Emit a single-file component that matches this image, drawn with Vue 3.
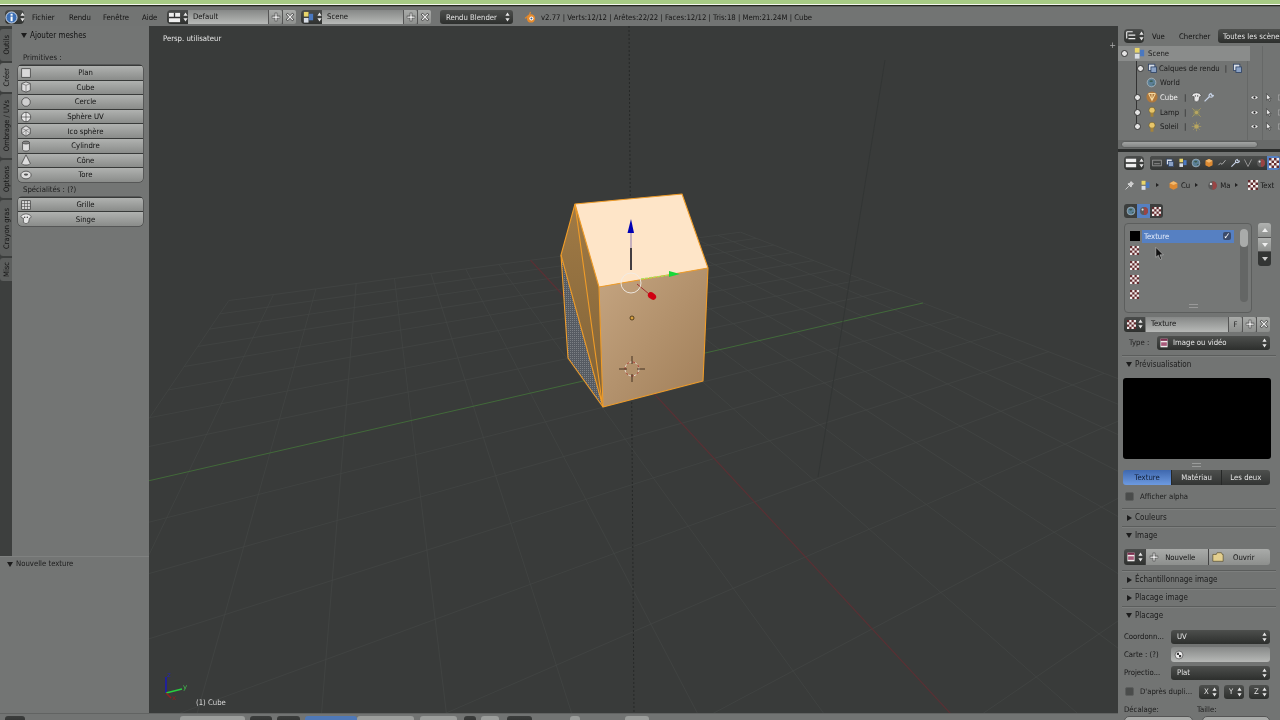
<script setup>
import { computed } from 'vue'

const H = (u, v) => {
  const w = 1 + 0.2935 * u - 0.64 * v
  return [(561.9 * u - 238 * v + 632) / w, (22.1 * u - 57 * v + 369.8) / w]
}
const gridLines = computed(() => {
  const out = []
  for (let i = -8; i <= 8; i++) {
    if (i !== 0) {
      const a = H(i / 8, -1), b = H(i / 8, 1), c = H(-1, i / 8), d = H(1, i / 8)
      out.push({ k: 'u' + i, x1: a[0], y1: a[1], x2: b[0], y2: b[1] })
      out.push({ k: 'v' + i, x1: c[0], y1: c[1], x2: d[0], y2: d[1] })
    }
  }
  return out
})
const greenAxis = [H(-1, 0), H(1, 0)]
const redAxis = [H(0, -1), H(0, 1)]

const tabs = [
  { t: 'Outils', h: 32 }, { t: 'Créer', h: 29, on: true }, { t: 'Ombrage / UVs', h: 64 },
  { t: 'Options', h: 38 }, { t: 'Crayon gras', h: 56 }, { t: 'Misc', h: 23 }
]
const prims = [
  ['Plan', 'i-plane'], ['Cube', 'i-cube'], ['Cercle', 'i-circle'], ['Sphère UV', 'i-sphere'],
  ['Ico sphère', 'i-ico'], ['Cylindre', 'i-cyl'], ['Cône', 'i-cone'], ['Tore', 'i-torus']
]
const specs = [['Grille', 'i-grid'], ['Singe', 'i-monkey']]
const editorTabs = ['i-render', 'i-layers', 'i-scene', 'i-world', 'i-obj', 'i-link', 'i-wrench', 'i-vert', 'i-mat', 'i-check']
</script>

<template>
  <div class="app">
    <svg class="defs" width="0" height="0">
      <defs>
        <symbol id="i-ud" viewBox="0 0 6 12"><path d="M3 0.5 5.5 4.5H.5zM3 11.5.5 7.5h5z" fill="#e8e8e8"/></symbol>
        <symbol id="i-info" viewBox="0 0 14 14"><circle cx="7" cy="7" r="6" fill="#3c6fb5" stroke="#dfe8f5"/><rect x="6" y="6" width="2.2" height="5" fill="#fff"/><rect x="6" y="3" width="2.2" height="2" fill="#fff"/></symbol>
        <symbol id="i-layout" viewBox="0 0 14 14"><rect x="1" y="2" width="12" height="10" fill="#eee"/><path d="M7 2v5M1 7h12" stroke="#333" stroke-width="1.4"/></symbol>
        <symbol id="i-scene" viewBox="0 0 14 14"><rect x="2" y="1" width="5" height="5" fill="#e9d56a"/><rect x="7.500" y="3" width="4.500" height="7" fill="#4a78c0"/><rect x="2" y="7.500" width="5" height="5" fill="#d8dde6"/></symbol>
        <symbol id="i-plus" viewBox="0 0 12 12"><path d="M6 1v10M1 6h10" stroke="#333" stroke-width="3"/><path d="M6 1.500v9M1.500 6h9" stroke="#fff" stroke-width="1.500"/></symbol>
        <symbol id="i-x" viewBox="0 0 12 12"><path d="M2 2l8 8M10 2l-8 8" stroke="#333" stroke-width="3"/><path d="M2.500 2.500l7 7M9.500 2.500l-7 7" stroke="#e8e8e8" stroke-width="1.600"/></symbol>
        <symbol id="i-blender" viewBox="0 0 14 14"><circle cx="7.500" cy="8" r="4.500" fill="#e58a2c"/><circle cx="8" cy="8" r="2.200" fill="#fff"/><circle cx="8" cy="8" r="1.100" fill="#3a5d8f"/><path d="M1 8 6 4 7 1" stroke="#e58a2c" stroke-width="1.200" fill="none"/></symbol>
        <symbol id="i-check" viewBox="0 0 12 12"><rect width="12" height="12" fill="#f3eeee"/><path d="M0 0h3v3H0zM6 0h3v3H6zM3 3h3v3H3zM9 3h3v3H9zM0 6h3v3H0zM6 6h3v3H6zM3 9h3v3H3zM9 9h3v3H9z" fill="#632a2d"/></symbol>
        <symbol id="i-plane" viewBox="0 0 14 14"><rect x="2" y="2" width="10" height="10" fill="#d9d9d9" stroke="#333" stroke-width=".8"/></symbol>
        <symbol id="i-cube" viewBox="0 0 14 14"><path d="M7 1l5 2v8l-5 2-5-2V3z" fill="#ddd" stroke="#333" stroke-width=".8"/><path d="M2 3l5 2 5-2M7 5v8" fill="none" stroke="#555" stroke-width=".7"/></symbol>
        <symbol id="i-circle" viewBox="0 0 14 14"><circle cx="7" cy="7" r="5" fill="#cfcfcf" stroke="#333" stroke-width=".8"/></symbol>
        <symbol id="i-sphere" viewBox="0 0 14 14"><circle cx="7" cy="7" r="5.500" fill="#e8e8e8" stroke="#333" stroke-width=".8"/><path d="M1.500 7h11M7 1.500v11" stroke="#444" stroke-width=".8"/></symbol>
        <symbol id="i-ico" viewBox="0 0 14 14"><path d="M7 1l5 3v6l-5 3-5-3V4z" fill="#ddd" stroke="#333" stroke-width=".8"/><path d="M2 4l5 2 5-2M7 6v7M2 10l5-4 5 4" fill="none" stroke="#555" stroke-width=".6"/></symbol>
        <symbol id="i-cyl" viewBox="0 0 14 14"><path d="M3 3v8c0 2.500 8 2.500 8 0V3z" fill="#ddd" stroke="#333" stroke-width=".8"/><ellipse cx="7" cy="3" rx="4" ry="1.700" fill="#888" stroke="#333" stroke-width=".8"/></symbol>
        <symbol id="i-cone" viewBox="0 0 14 14"><path d="M7 1l5 10c-1.500 2.500-8.500 2.500-10 0z" fill="#ddd" stroke="#333" stroke-width=".8"/></symbol>
        <symbol id="i-torus" viewBox="0 0 14 14"><ellipse cx="7" cy="7" rx="6" ry="4.500" fill="#ddd" stroke="#333" stroke-width=".8"/><ellipse cx="7" cy="6.500" rx="2.500" ry="1.300" fill="#555"/></symbol>
        <symbol id="i-grid" viewBox="0 0 14 14"><rect x="2" y="2" width="10" height="10" fill="#dcdcdc" stroke="#333" stroke-width=".8"/><path d="M5.300 2v10M8.700 2v10M2 5.300h10M2 8.700h10" stroke="#444" stroke-width=".7"/></symbol>
        <symbol id="i-monkey" viewBox="0 0 14 14"><path d="M1 4q2-3 6-3t6 3q0 2-2 2l-1 5q-3 3-6 0L4 6Q1 6 1 4z" fill="#e6e6e6" stroke="#333" stroke-width=".7"/><circle cx="5.500" cy="5" r=".8" fill="#333"/><circle cx="8.500" cy="5" r=".8" fill="#333"/></symbol>
        <symbol id="i-outliner" viewBox="0 0 14 14"><path d="M2 2h7M4 6h8M4 10h8M2 2v8" stroke="#eee" stroke-width="1.300" fill="none"/></symbol>
        <symbol id="i-props" viewBox="0 0 14 14"><rect x="1" y="2" width="12" height="4" fill="#eee"/><rect x="1" y="8" width="12" height="4" fill="#eee"/></symbol>
        <symbol id="i-layers" viewBox="0 0 14 14"><rect x="2" y="1.500" width="8" height="8" fill="#d9dfe8" stroke="#2b3f62"/><rect x="5" y="5" width="7" height="7" fill="#8aa1c4" stroke="#2b3f62"/></symbol>
        <symbol id="i-world" viewBox="0 0 14 14"><circle cx="7" cy="7" r="5.500" fill="#5b7f96" stroke="#c9d6dd" stroke-width=".7"/><path d="M4 5q3-2 5 0-2 3-5 0zM8 9q2-1 3 0-2 2-3 0z" fill="#3d5d50"/></symbol>
        <symbol id="i-obj" viewBox="0 0 14 14"><path d="M7 1.500l5 2.500v6l-5 2.500L2 10V4z" fill="#dd8a32"/><path d="M2 4l5 2.500L12 4 7 1.500z" fill="#f1b86e"/></symbol>
        <symbol id="i-mesh" viewBox="0 0 14 14"><circle cx="7" cy="7" r="6.500" fill="#c47a2a" opacity=".75"/><path d="M3 3l4 8 4-8M3 3h8M7 3v8" stroke="#f6d9a0" stroke-width="1.200" fill="none"/></symbol>
        <symbol id="i-lamp" viewBox="0 0 14 14"><circle cx="7" cy="5" r="3.600" fill="#e8c66a" stroke="#5a4a1a" stroke-width=".6"/><rect x="5.300" y="8" width="3.400" height="4.500" fill="#a5843a"/></symbol>
        <symbol id="i-lampdata" viewBox="0 0 14 14"><rect x="3" y="3" width="8" height="8" fill="#8a8a60" opacity=".7"/><circle cx="7" cy="7" r="2.300" fill="#b8a660"/><path d="M1.500 1.500l3 3M12.500 1.500l-3 3M1.500 12.500l3-3M12.500 12.500l-3-3" stroke="#a89a60"/></symbol>
        <symbol id="i-sun" viewBox="0 0 14 14"><circle cx="7" cy="7" r="3" fill="#b8a660"/><path d="M7 1v2.500M7 10.500V13M1 7h2.500M10.500 7H13M2.800 2.800l1.800 1.800M9.400 9.400l1.800 1.800M2.800 11.200l1.800-1.800M9.400 4.600l1.800-1.800" stroke="#a89a60"/></symbol>
        <symbol id="i-eye" viewBox="0 0 14 14"><path d="M1 7q6-6 12 0-6 6-12 0z" fill="#eee" stroke="#222" stroke-width=".6"/><circle cx="7" cy="7" r="1.800" fill="#222"/></symbol>
        <symbol id="i-arrow" viewBox="0 0 14 14"><path d="M4 1v10l2.500-2 2 4 1.500-.8-2-3.700h3z" fill="#eee" stroke="#222" stroke-width=".8"/></symbol>
        <symbol id="i-wrench" viewBox="0 0 14 14"><path d="M2 12l6-6M8 6q-1-3 2-4l1 2 2 .500q-1 3-5 1.500" stroke="#c8d4e8" stroke-width="1.600" fill="none"/></symbol>
        <symbol id="i-render" viewBox="0 0 14 14"><rect x="1" y="3" width="12" height="8" fill="none" stroke="#aaa"/><path d="M3 8h8" stroke="#aaa"/></symbol>
        <symbol id="i-link" viewBox="0 0 14 14"><path d="M2 10l3-3 2 2 5-6" stroke="#aaa" stroke-width="1.400" fill="none"/></symbol>
        <symbol id="i-vert" viewBox="0 0 14 14"><path d="M2 2l5 10 5-10" stroke="#999" stroke-width="1.300" fill="none"/></symbol>
        <symbol id="i-mat" viewBox="0 0 14 14"><circle cx="7" cy="7" r="5.500" fill="#5a5a5a"/><path d="M7 1.500a5.500 5.500 0 0 1 0 11z" fill="#994444"/><circle cx="5" cy="5" r="1.500" fill="#ddd"/></symbol>
        <symbol id="i-image" viewBox="0 0 14 14"><rect x="2" y="1" width="10" height="12" fill="#f0ecec"/><rect x="2" y="1" width="10" height="3" fill="#7c2f4f"/><rect x="3" y="6" width="8" height="5" fill="#a85a7a"/></symbol>
        <symbol id="i-folder" viewBox="0 0 14 14"><path d="M1 4h4l1-2h5l1 2h1v8H1z" fill="#e3cf8f" stroke="#4a3f1f" stroke-width=".7"/></symbol>
        <symbol id="i-uvmap" viewBox="0 0 14 14"><circle cx="7" cy="7" r="5.500" fill="#eee" stroke="#222" stroke-width=".8"/><path d="M4 4h3v3H4zM7 7h3v3H7z" fill="#333"/></symbol>
        <symbol id="i-pin" viewBox="0 0 14 14"><path d="M2 12l4-4M5 5l4 4 1-3 2-1-3-3-1 2z" stroke="#ddd" stroke-width="1.100" fill="#ccc"/></symbol>
      </defs>
    </svg>

    <div class="strip"></div>

    <header class="topbar">
      <div class="sel w19"><svg class="ic13"><use href="#i-info"/></svg><svg class="ud"><use href="#i-ud"/></svg></div>
      <nav class="menus">
        <span class="m1">Fichier</span><span class="m2">Rendu</span><span class="m3">Fenêtre</span><span class="m4">Aide</span>
      </nav>
      <div class="sel w21 s1"><svg class="ic13"><use href="#i-layout"/></svg><svg class="ud"><use href="#i-ud"/></svg></div>
      <div class="field w80">Default</div>
      <div class="mini"><svg class="ic10"><use href="#i-plus"/></svg></div>
      <div class="mini"><svg class="ic10"><use href="#i-x"/></svg></div>
      <div class="sel w21 s2"><svg class="ic13"><use href="#i-scene"/></svg><svg class="ud"><use href="#i-ud"/></svg></div>
      <div class="field w81">Scene</div>
      <div class="mini"><svg class="ic10"><use href="#i-plus"/></svg></div>
      <div class="mini"><svg class="ic10"><use href="#i-x"/></svg></div>
      <div class="drop engine"><span>Rendu Blender</span><svg class="ud"><use href="#i-ud"/></svg></div>
      <svg class="ic13 blend"><use href="#i-blender"/></svg>
      <div class="stats">v2.77 | Verts:12/12 | Arêtes:22/22 | Faces:12/12 | Tris:18 | Mem:21.24M | Cube</div>
    </header>

    <main class="main">
      <div class="work">
        <div class="work-top">
          <aside class="left">
            <div class="left-top">
              <div class="vtabs">
                <div v-for="t in tabs" :key="t.t" class="vtab" :class="{ on: t.on }" :style="{ height: t.h + 'px' }"><span>{{ t.t }}</span></div>
              </div>
              <div class="shelf">
                <div class="shelf-head"><i class="tri down"></i>Ajouter meshes</div>
                <div class="shelf-label">Primitives :</div>
                <div class="stack">
                  <div v-for="p in prims" :key="p[0]" class="tbtn"><svg class="ic12"><use :href="'#' + p[1]"/></svg><span>{{ p[0] }}</span></div>
                </div>
                <div class="shelf-label spec">Spécialités : (?)</div>
                <div class="stack">
                  <div v-for="p in specs" :key="p[0]" class="tbtn"><svg class="ic12"><use :href="'#' + p[1]"/></svg><span>{{ p[0] }}</span></div>
                </div>
              </div>
            </div>
            <div class="oppanel"><i class="tri down"></i>Nouvelle texture</div>
          </aside>

          <section class="view">
            <svg class="scene" viewBox="149 26 969 687">
              <defs>
                <linearGradient id="frontG" x1="0" y1="0" x2="1" y2="1">
                  <stop offset="0" stop-color="#c5a581"/><stop offset="1" stop-color="#a07e58"/>
                </linearGradient>
                <linearGradient id="sideG" x1="0" y1="0" x2="0" y2="1">
                  <stop offset="0" stop-color="#a07a45"/><stop offset="1" stop-color="#7f6238"/>
                </linearGradient>
                <pattern id="hatch" width="2" height="2" patternUnits="userSpaceOnUse">
                  <rect width="2" height="2" fill="#565b62"/><rect width="1" height="1" fill="#7c8085"/>
                </pattern>
              </defs>
              <line v-for="l in gridLines" :key="l.k" :x1="l.x1" :y1="l.y1" :x2="l.x2" :y2="l.y2" class="grid"/>
              <line :x1="greenAxis[0][0]" :y1="greenAxis[0][1]" :x2="greenAxis[1][0]" :y2="greenAxis[1][1]" class="ax-g"/>
              <line :x1="redAxis[0][0]" :y1="redAxis[0][1]" :x2="redAxis[1][0]" :y2="redAxis[1][1]" class="ax-r"/>
              <line x1="629" y1="26" x2="634" y2="713" class="ax-z"/>
              <line x1="885" y1="60" x2="818" y2="477" class="ax-d"/>

              <polygon points="561,255 568,358 603,407" fill="url(#hatch)"/>
              <polygon points="575,204 599,287 603,407 561,255" fill="url(#sideG)"/>
              <polygon points="599,287 708,268 703,381 603,407" fill="url(#frontG)"/>
              <polygon points="575,204 682,194 708,268 599,287" fill="#fee5c8"/>
              <g class="edge">
                <path d="M575 204 682 194 708 268 703 381 603 407 599 287 575 204 561 255 568 358 603 407"/>
                <path d="M599 287 708 268M575 204 602 402M561 255 603 407"/>
              </g>
              <line x1="631" y1="270" x2="631" y2="248" stroke="#050515" stroke-width="1.500"/>
              <line x1="631" y1="248" x2="631" y2="232" stroke="#8a78b0" stroke-width="1"/>
              <path d="M631 219 634 233H627.500z" fill="#0000b4"/>
              <line x1="641" y1="279" x2="670" y2="275" stroke="#a9e05a" stroke-width="1.300" stroke-dasharray="3 1"/>
              <path d="M669 271l11 3-11 3z" fill="#18d838"/>
              <line x1="637" y1="284" x2="649" y2="294" stroke="#a23030" stroke-width="1"/>
              <ellipse cx="652" cy="296" rx="4.500" ry="3.200" transform="rotate(35 652 296)" fill="#d00012"/>
              <circle cx="631" cy="283" r="10" fill="none" stroke="#f0ece6" stroke-width=".9"/>
              <circle cx="632" cy="318" r="2" fill="#d8a040" stroke="#3a2a10" stroke-width=".8"/>
              <circle cx="632" cy="369" r="7" fill="none" stroke="#fff" stroke-width=".7" stroke-dasharray="3 3"/>
              <circle cx="632" cy="369" r="7" fill="none" stroke="#b03030" stroke-width=".7" stroke-dasharray="3 3" stroke-dashoffset="3"/>
              <path d="M619 369h8M637 369h8M632 356v8M632 374v8" stroke="#2a1a10" stroke-width=".8"/>

              <path d="M166 693V677" stroke="#1818c0" stroke-width="1.400"/>
              <path d="M166 693 182 689" stroke="#28d040" stroke-width="1.400"/>
              <path d="M166 693 171 698" stroke="#902020" stroke-width="1.400"/>
              <text x="183" y="689" class="axt y">y</text>
              <text x="167" y="677" class="axt z">z</text>
              <text x="172" y="700" class="axt x">x</text>
            </svg>
            <div class="persp">Persp. utilisateur</div>
            <div class="objname">(1) Cube</div>
            <div class="vplus">+</div>
          </section>
        </div>
        <footer class="bottom">
          <div class="bb sel-b b1"></div>
          <div class="bb lite b2"></div>
          <div class="bb sel-b b3"></div>
          <div class="bb sel-b b4"></div>
          <div class="bb blue b5"></div>
          <div class="bb lite b6"></div>
          <div class="bb lite b7"></div>
          <div class="bb sel-b b8"></div>
          <div class="bb lite b9"></div>
          <div class="bb sel-b b10"></div>
          <div class="bb lite b11"></div>
          <div class="bb lite b12"></div>
        </footer>
      </div>

      <aside class="right">
        <div class="out-head">
          <div class="sel w20"><svg class="ic12"><use href="#i-outliner"/></svg><svg class="ud"><use href="#i-ud"/></svg></div>
          <span class="om1">Vue</span><span class="om2">Chercher</span>
          <div class="drop allscene">Toutes les scènes</div>
        </div>
        <div class="outliner">
          <div class="col c1"></div><div class="col c2"></div><div class="treeline"></div>
          <div class="orow sel-row l0"><i class="exp"></i><svg class="ic13"><use href="#i-scene"/></svg><span>Scene</span></div>
          <div class="orow l1"><i class="exp"></i><svg class="ic11"><use href="#i-layers"/></svg><span>Calques de rendu</span><em>|</em><svg class="ic11 after"><use href="#i-layers"/></svg></div>
          <div class="orow l2"><svg class="ic11"><use href="#i-world"/></svg><span>World</span></div>
          <div class="orow l3"><i class="exp"></i><svg class="ic12"><use href="#i-mesh"/></svg><span class="white">Cube</span><em>|</em><svg class="ic11"><use href="#i-monkey"/></svg><svg class="ic11"><use href="#i-wrench"/></svg><div class="res"><svg class="ic9"><use href="#i-eye"/></svg><svg class="ic9"><use href="#i-arrow"/></svg><svg class="ic9"><use href="#i-render"/></svg></div></div>
          <div class="orow l3"><i class="exp"></i><svg class="ic12"><use href="#i-lamp"/></svg><span>Lamp</span><em>|</em><svg class="ic11"><use href="#i-lampdata"/></svg><div class="res"><svg class="ic9"><use href="#i-eye"/></svg><svg class="ic9"><use href="#i-arrow"/></svg><svg class="ic9"><use href="#i-render"/></svg></div></div>
          <div class="orow l3"><i class="exp"></i><svg class="ic12"><use href="#i-lamp"/></svg><span>Soleil</span><em>|</em><svg class="ic11"><use href="#i-sun"/></svg><div class="res"><svg class="ic9"><use href="#i-eye"/></svg><svg class="ic9"><use href="#i-arrow"/></svg><svg class="ic9"><use href="#i-render"/></svg></div></div>
        </div>
        <div class="hscroll"><div class="thumb"></div></div>
        <div class="divider"></div>

        <div class="prop-head">
          <div class="sel w20"><svg class="ic12"><use href="#i-props"/></svg><svg class="ud"><use href="#i-ud"/></svg></div>
          <div class="etabs">
            <div v-for="(e, i) in editorTabs" :key="i" class="etab" :class="{ on: e === 'i-check' }"><svg class="ic10"><use :href="'#' + e"/></svg></div>
          </div>
        </div>
        <div class="crumbs">
          <svg class="ic11"><use href="#i-pin"/></svg><svg class="ic11 c-s"><use href="#i-scene"/></svg><i class="tiny"></i>
          <svg class="ic11 c-o"><use href="#i-obj"/></svg><span>Cu</span><i class="tiny"></i>
          <svg class="ic11 c-m"><use href="#i-mat"/></svg><span>Ma</span><i class="tiny"></i>
          <svg class="ic10 c-t"><use href="#i-check"/></svg><span>Text</span>
        </div>

        <div class="props">
          <div class="subtabs">
            <div class="st"><svg class="ic10"><use href="#i-world"/></svg></div>
            <div class="st on"><svg class="ic10"><use href="#i-mat"/></svg></div>
            <div class="st"><svg class="ic9"><use href="#i-check"/></svg></div>
          </div>

          <div class="listwrap">
            <div class="listbox">
              <div class="lrow"><i class="black"></i><div class="active"><span>Texture</span><i class="cb on">✓</i></div></div>
              <div class="lrow"><svg class="ic9"><use href="#i-check"/></svg></div>
              <div class="lrow"><svg class="ic9"><use href="#i-check"/></svg></div>
              <div class="lrow"><svg class="ic9"><use href="#i-check"/></svg></div>
              <div class="lrow"><svg class="ic9"><use href="#i-check"/></svg></div>
              <div class="vbar"><div class="vthumb"></div></div>
              <div class="lgrip"></div>
              <svg class="cursor" viewBox="0 0 12 16"><path d="M1 0v12l3-2.500 2 5 2-.8-2-4.700h4z" fill="#111" stroke="#ddd" stroke-width=".6"/></svg>
            </div>
            <div class="lbtns">
              <div class="lb"><i class="up"></i></div>
              <div class="lb"><i class="dn"></i></div>
              <div class="lb dark"><i class="dn w"></i></div>
            </div>
          </div>

          <div class="idrow">
            <div class="sel w21 flat"><svg class="ic9"><use href="#i-check"/></svg><svg class="ud"><use href="#i-ud"/></svg></div>
            <div class="field grow">Texture</div>
            <div class="mini f">F</div>
            <div class="mini"><svg class="ic10"><use href="#i-plus"/></svg></div>
            <div class="mini"><svg class="ic10"><use href="#i-x"/></svg></div>
          </div>

          <div class="typerow">
            <span class="lab">Type :</span>
            <div class="drop grow"><svg class="ic10"><use href="#i-image"/></svg><span class="dt">Image ou vidéo</span><svg class="ud"><use href="#i-ud"/></svg></div>
          </div>

          <div class="phead firsthead"><i class="tri down"></i>Prévisualisation<i class="dots"></i></div>
          <div class="preview"></div>
          <div class="pgrip"></div>
          <div class="seg">
            <div class="on">Texture</div><div>Matériau</div><div>Les deux</div>
          </div>
          <div class="check"><i class="box"></i><span>Afficher alpha</span></div>

          <div class="phead"><i class="tri rt"></i>Couleurs<i class="dots"></i></div>
          <div class="phead"><i class="tri down"></i>Image<i class="dots"></i></div>
          <div class="newrow">
            <div class="sel w21 flat"><svg class="ic10"><use href="#i-image"/></svg><svg class="ud"><use href="#i-ud"/></svg></div>
            <div class="nb"><svg class="ic10"><use href="#i-plus"/></svg><span>Nouvelle</span></div>
            <div class="nb"><svg class="ic12"><use href="#i-folder"/></svg><span>Ouvrir</span></div>
          </div>
          <div class="phead sp"><i class="tri rt"></i>Échantillonnage image<i class="dots"></i></div>
          <div class="phead"><i class="tri rt"></i>Placage image<i class="dots"></i></div>
          <div class="phead"><i class="tri down"></i>Placage<i class="dots"></i></div>

          <div class="frow first"><span class="flab">Coordonn...</span><div class="drop grow"><span>UV</span><svg class="ud"><use href="#i-ud"/></svg></div></div>
          <div class="frow"><span class="flab">Carte : (?)</span><div class="field grow"><svg class="ic10"><use href="#i-uvmap"/></svg></div></div>
          <div class="frow"><span class="flab">Projectio...</span><div class="drop grow"><span>Plat</span><svg class="ud"><use href="#i-ud"/></svg></div></div>
          <div class="frow dup">
            <i class="box"></i><span class="duplab">D'après dupli...</span>
            <div class="drop xyz"><span>X</span><svg class="ud"><use href="#i-ud"/></svg></div>
            <div class="drop xyz"><span>Y</span><svg class="ud"><use href="#i-ud"/></svg></div>
            <div class="drop xyz"><span>Z</span><svg class="ud"><use href="#i-ud"/></svg></div>
          </div>
          <div class="two"><span>Décalage:</span><span>Taille:</span></div>
          <div class="two boxes"><i></i><i></i></div>
        </div>
      </aside>
    </main>
  </div>
</template>

<style scoped>
.app { width: 1280px; height: 720px; overflow: hidden; display: flex; flex-direction: column; background: #727473; font-family: "DejaVu Sans Condensed", "DejaVu Sans", sans-serif; font-size: 7.700px; color: #111; filter: blur(.4px); position: relative; }
.defs { position: absolute; }
svg { display: block; flex: none; }
i, em, b { font-style: normal; font-weight: normal; display: block; flex: none; }
.ic9 { width: 9px; height: 9px; } .ic10 { width: 10px; height: 10px; } .ic11 { width: 11px; height: 11px; }
.ic12 { width: 12px; height: 12px; } .ic13 { width: 13px; height: 13px; }
.ud { width: 5px; height: 10px; }

.strip { height: 7px; flex: none; background: linear-gradient(#a7cb85 0 4px, #f4f6ee 4px 5px, #25281f 5px 6px, #5a5c5b 6px); }
.topbar { height: 19px; flex: none; display: flex; align-items: center; padding: 1px 0 0 5px; box-sizing: border-box; color: #111; background: #727473; }
.sel { height: 14px; display: flex; align-items: center; justify-content: center; gap: 2px; background: linear-gradient(#4a4c4b, #2f312f); border-radius: 4px 0 0 4px; flex: none; }
.w19 { width: 19px; border-radius: 4px; } .w20 { width: 20px; border-radius: 4px; } .w21 { width: 21px; }
.menus { display: flex; width: 143px; flex: none; }
.menus span { display: block; flex: none; }
.m1 { margin-left: 8px; width: 37px; } .m2 { width: 34px; } .m3 { width: 39px; }
.s2 { margin-left: 5px; }
.field { height: 14px; line-height: 14px; padding-left: 5px; background: linear-gradient(#868887, #b7b9b7); box-sizing: border-box; flex: none; display: flex; align-items: center; color: #111; }
.w80 { width: 80px; } .w81 { width: 81px; }
.mini { width: 14px; height: 14px; background: linear-gradient(#a9aba9, #8d8f8d); border-left: 1px solid #555; box-sizing: border-box; display: flex; align-items: center; justify-content: center; flex: none; border-radius: 0 2px 2px 0; }
.drop { height: 14px; background: linear-gradient(#4d4f4d, #2d2f2d); border-radius: 3px; color: #e6e6e6; display: flex; align-items: center; justify-content: space-between; padding: 0 3px 0 6px; box-sizing: border-box; flex: none; }
.grow { flex: 1 1 0; min-width: 0; }
.engine { width: 73px; margin-left: 9px; }
.blend { margin-left: 11px; }
.stats { margin-left: 4px; white-space: nowrap; color: #151515; }

.main { flex: 1; min-height: 0; display: flex; }
.work { width: 1118px; flex: none; display: flex; flex-direction: column; }
.work-top { flex: 1; min-height: 0; display: flex; }
.left { width: 149px; flex: none; display: flex; flex-direction: column; background: #737574; }
.left-top { height: 530px; flex: none; display: flex; }
.vtabs { width: 12px; flex: none; background: #3d3f3e; padding-top: 3px; box-sizing: border-box; display: flex; flex-direction: column; gap: 2px; }
.vtab { background: #5c5e5d; border-radius: 3px 0 0 3px; display: flex; align-items: center; justify-content: center; overflow: hidden; flex: none; }
.vtab.on { background: #737574; }
.vtab span { writing-mode: vertical-rl; transform: rotate(180deg); white-space: nowrap; color: #151515; font-size: 7.500px; }
.shelf { flex: 1; padding: 2px 6px 0; box-sizing: border-box; }
.shelf-head { height: 14px; display: flex; align-items: center; padding-left: 3px; font-size: 8px; }
.tri { width: 0; height: 0; margin-right: 3px; }
.tri.down { border-left: 3px solid transparent; border-right: 3px solid transparent; border-top: 5px solid #1c1c1c; }
.tri.rt { border-top: 3px solid transparent; border-bottom: 3px solid transparent; border-left: 5px solid #1c1c1c; margin-left: 1px; }
.shelf-label { height: 13px; line-height: 13px; margin-top: 9px; padding-left: 5px; color: #1c1c1c; }
.shelf-label.spec { margin-top: 1px; height: 14px; line-height: 15px; }
.stack { border-radius: 4px; overflow: hidden; background: #333; box-shadow: 0 0 0 .5px #3a3a3a; position: relative; top: 1px; }
.tbtn { height: 14.600px; box-sizing: border-box; border-top: 1px solid #383a39; display: flex; align-items: center; position: relative; background: linear-gradient(#b0b2b0, #8a8c8a); }
.tbtn svg { margin-left: 2px; }
.tbtn span { position: absolute; left: 10px; right: 0; text-align: center; color: #111; }
.oppanel { height: 157px; flex: none; border-top: 1px solid #7f8180; padding: 1px 0 0 7px; box-sizing: border-box; display: flex; align-items: flex-start; color: #1a1a1a; line-height: 12px; }
.oppanel .tri { margin-top: 4px; }

.view { flex: 1; position: relative; background: #393b3a; overflow: hidden; }
.scene { position: absolute; inset: 0; width: 100%; height: 100%; }
.grid { stroke: #444645; stroke-width: .7; }
.ax-g { stroke: #426a3a; stroke-width: 1; }
.ax-r { stroke: #5a3034; stroke-width: 1.200; }
.ax-z { stroke: #262827; stroke-width: 1; stroke-dasharray: 2 2; }
.ax-d { stroke: #333635; stroke-width: 1; }
.edge path { fill: none; stroke: #f09c28; stroke-width: 1.100; stroke-linejoin: round; }
.axt { font-size: 7px; font-family: "DejaVu Sans", sans-serif; }
.axt.y { fill: #46c050; } .axt.z { fill: #2424b0; } .axt.x { fill: #902020; }
.persp { position: absolute; left: 14px; top: 8px; color: #e8e8e8; }
.objname { position: absolute; left: 47px; top: 672px; color: #d8d8d8; }
.vplus { position: absolute; right: 2px; top: 14px; color: #aaa; font-size: 9px; }

.bottom { height: 7px; flex: none; display: flex; background: #727473; overflow: hidden; border-top: 1px solid #616362; box-sizing: border-box; padding-left: 5px; }
.bb { height: 10px; margin-top: 2px; border-radius: 3px; flex: none; }
.sel-b { background: linear-gradient(#3c3e3d, #2d2e2d); }
.lite { background: #9c9e9c; }
.blue { background: #4f79b8; }
.b1 { width: 20px; margin-right: 155px; } .b2 { width: 65px; margin-right: 5px; } .b3 { width: 22px; margin-right: 5px; }
.b4 { width: 23px; margin-right: 5px; } .b5 { width: 52px; } .b6 { width: 57px; margin-right: 6px; } .b7 { width: 37px; margin-right: 7px; }
.b8 { width: 12px; margin-right: 5px; } .b9 { width: 18px; margin-right: 8px; } .b10 { width: 25px; margin-right: 38px; } .b11 { width: 10px; margin-right: 45px; } .b12 { width: 24px; }

.right { width: 162px; flex: none; display: flex; flex-direction: column; background: #727473; overflow: hidden; position: relative; }
.out-head { height: 20px; flex: none; display: flex; align-items: center; padding-left: 6px; white-space: nowrap; }
.om1 { margin-left: 8px; width: 27px; flex: none; } .om2 { width: 39px; flex: none; }
.allscene { padding-left: 5px; width: 80px; justify-content: flex-start; flex: none; border-radius: 3px 0 0 3px; }
.outliner { height: 94px; flex: none; position: relative; background: #727473; }
.col { position: absolute; top: 0; bottom: 0; width: 1px; background: #666867; }
.c1 { left: 129px; } .c2 { left: 144px; }
.treeline { position: absolute; left: 18px; top: 14px; height: 67px; width: 1px; background: #333; }
.orow { height: 14.700px; display: flex; align-items: center; position: relative; white-space: nowrap; color: #1a1a1a; }
.orow em { margin: 0 7px; color: #222; }
.orow svg { margin-right: 1px; }
.sel-row { background: #8a8c8b; width: 129px; }
.exp { width: 5px; height: 5px; border-radius: 50%; background: #e4e4e4; border: 1px solid #333; margin-right: 6px; }
.l0 { padding-left: 3px; } .l0 svg { margin-right: 2px; } .l0 .exp { margin-right: 5px; }
.l1 { padding-left: 19px; } .l1 .exp { margin-right: 3px; } .l1 em { margin: 0 5px; }
.l2 { padding-left: 28px; } .l2 span { margin-left: 2px; }
.l3 { padding-left: 16px; } .l3 .exp { margin-right: 5px; } .l3 span { margin-left: 1px; width: 23px; } .l3 em { margin: 0 5px 0 1px; }
.white { color: #f2f2f2; }
.res { position: absolute; left: 132px; top: 3px; display: flex; gap: 4px; }
.hscroll { height: 9px; flex: none; background: #686a69; padding: 1px 22px 0 3px; box-sizing: border-box; }
.thumb { height: 7px; border-radius: 4px; background: linear-gradient(#a2a4a3, #848685); border: 1px solid #5d5f5e; box-sizing: border-box; }
.divider { height: 3px; flex: none; background: #2c2e2d; }

.prop-head { height: 21px; flex: none; display: flex; align-items: center; padding-left: 6px; }
.etabs { margin-left: 6px; display: flex; background: #3c3e3d; border-radius: 3px; height: 14px; overflow: hidden; flex: none; }
.etab { width: 13px; height: 14px; display: flex; align-items: center; justify-content: center; background: linear-gradient(#4c4e4d, #343635); }
.etab.on { background: #5680c2; }
.crumbs { height: 24px; flex: none; display: flex; align-items: center; padding-left: 6px; white-space: nowrap; color: #161616; }
.tiny { width: 0; height: 0; border-top: 2px solid transparent; border-bottom: 2px solid transparent; border-left: 3px solid #222; margin: 0 9px 0 5px; }
.c-s { margin-left: 5px; } .c-o, .c-m, .c-t { margin-right: 2px; } .c-t { margin-left: 1px; }

.props { flex: 1; min-height: 0; padding: 0 10px 0 6px; display: flex; flex-direction: column; }
.subtabs { flex: none; margin-top: 7px; width: 39px; height: 14px; display: flex; background: #3c3e3d; border-radius: 3px; overflow: hidden; }
.st { flex: 1; display: flex; align-items: center; justify-content: center; }
.st.on { background: #5680c2; }
.listwrap { flex: none; margin-top: 5px; height: 90px; display: flex; gap: 6px; }
.listbox { width: 128px; flex: none; height: 90px; box-sizing: border-box; position: relative; padding: 5px 0 0 5px; border: 1px solid #5c5e5d; border-radius: 4px; background: #757776; }
.lrow { height: 14.500px; display: flex; align-items: center; }
.black { width: 10px; height: 10px; background: #000; margin-right: 2px; }
.active { width: 92px; height: 13px; background: #5680c2; color: #e8eefc; display: flex; align-items: center; justify-content: space-between; padding: 0 3px 0 2px; box-sizing: border-box; }
.cb { width: 8px; height: 8px; background: #3c4c6c; color: #fff; font-size: 9px; line-height: 8px; border-radius: 2px; text-align: center; }
.vbar { position: absolute; right: 3px; top: 5px; width: 8px; height: 73px; background: #646665; border-radius: 4px; }
.vthumb { height: 18px; border-radius: 4px; background: #a9abaa; }
.lgrip { position: absolute; left: 64px; bottom: 4px; width: 9px; height: 2px; border-top: 1px solid #999; border-bottom: 1px solid #999; }
.cursor { position: absolute; left: 30px; top: 23px; width: 10px; height: 14px; }
.lbtns { width: 13px; flex: none; height: 43px; display: flex; flex-direction: column; border-radius: 3px; overflow: hidden; }
.lb { flex: 1; background: linear-gradient(#b0b2b0, #8e908e); border-bottom: 1px solid #555; display: flex; align-items: center; justify-content: center; }
.lb.dark { background: #333534; border-bottom: 0; }
.up, .dn { width: 0; height: 0; border-left: 3px solid transparent; border-right: 3px solid transparent; }
.up { border-bottom: 4px solid #eee; } .dn { border-top: 4px solid #eee; } .dn.w { border-top-color: #ccc; }
.idrow { flex: none; margin-top: 3px; height: 16px; display: flex; align-items: center; }
.idrow .field { height: 15px; margin-left: 1px; }
.idrow .mini { height: 15px; }
.flat { height: 15px; border-radius: 3px 0 0 3px; }
.f { color: #222; }
.typerow { flex: none; margin-top: 3px; height: 15px; display: flex; align-items: center; }
.lab { width: 33px; padding-left: 5px; box-sizing: border-box; color: #222; flex: none; }
.dt { flex: 1; margin-left: 4px; }
.typerow .drop { padding-left: 2px; }

.phead { flex: none; height: 18px; box-sizing: border-box; margin: 0 -6px 0 -2px; padding-left: 4px; border-top: 1px solid #5b5d5c; box-shadow: inset 0 1px 0 #7d7f7e; display: flex; align-items: center; color: #1c1c1c; font-size: 8px; position: relative; white-space: nowrap; }
.phead .tri { margin-right: 3px; }
.firsthead { margin-top: 5px; }
.dots { position: absolute; right: 3px; top: 7px; width: 8px; height: 4px; background-image: radial-gradient(#5d5f5e 40%, transparent 45%); background-size: 2px 2px; }
.phead.sp { margin-top: 5px; }
.preview { flex: none; margin: 5px -1px 0 -1px; height: 81px; background: #000; border-radius: 3px; }
.pgrip { flex: none; height: 11px; position: relative; }
.pgrip::after { content: ""; position: absolute; left: 68px; top: 4px; width: 9px; height: 2px; border-top: 1px solid #9a9c9b; border-bottom: 1px solid #9a9c9b; }
.seg { flex: none; height: 15px; margin-left: -1px; display: flex; border-radius: 3px; overflow: hidden; color: #e6e6e6; }
.seg div { flex: 1; line-height: 15px; text-align: center; background: linear-gradient(#4d4f4d, #333534); border-left: 1px solid #262827; }
.seg .on { background: linear-gradient(#3f68ae, #6d9ae0); color: #0e1a30; border-left: 0; }
.check { flex: none; height: 14px; margin-top: 4px; margin-bottom: 5px; display: flex; align-items: center; color: #1c1c1c; }
.box { width: 9px; height: 9px; background: #4a4c4b; border: 1px solid #5c5e5d; border-radius: 2px; margin-right: 6px; margin-left: 1px; box-sizing: border-box; }
.newrow { flex: none; margin-top: 5px; height: 16px; display: flex; }
.flat svg { margin: 0; }
.newrow .flat { height: 16px; }
.nb { flex: 1; display: flex; align-items: center; padding-left: 3px; background: linear-gradient(#a9aba9, #8d8f8d); border-left: 1px solid #444; color: #111; }
.nb span { flex: 1; text-align: center; padding-right: 6px; }
.nb:last-child { border-radius: 0 3px 3px 0; }
.frow { flex: none; height: 15px; margin-top: 3px; display: flex; align-items: center; }
.first { margin-top: 5px; }
.flab { width: 47px; flex: none; color: #161616; }
.frow .field { height: 15px; border-radius: 3px; padding-left: 3px; }
.dup { margin-top: 4px; }
.duplab { width: 59px; flex: none; color: #1c1c1c; white-space: nowrap; }
.xyz { width: 20px; padding: 0 2px 0 5px; margin-right: 5px; }
.xyz:last-child { margin-right: 0; }
.two { flex: none; display: flex; height: 13px; margin-top: 4px; align-items: center; color: #1c1c1c; }
.two span { width: 77px; }
.boxes { margin-top: 0; height: 10px; gap: 9px; align-items: flex-start; }
.boxes i { flex: 1; height: 10px; border-radius: 5px; background: #a9aba9; border: 1px solid #555; box-sizing: border-box; }
</style>
